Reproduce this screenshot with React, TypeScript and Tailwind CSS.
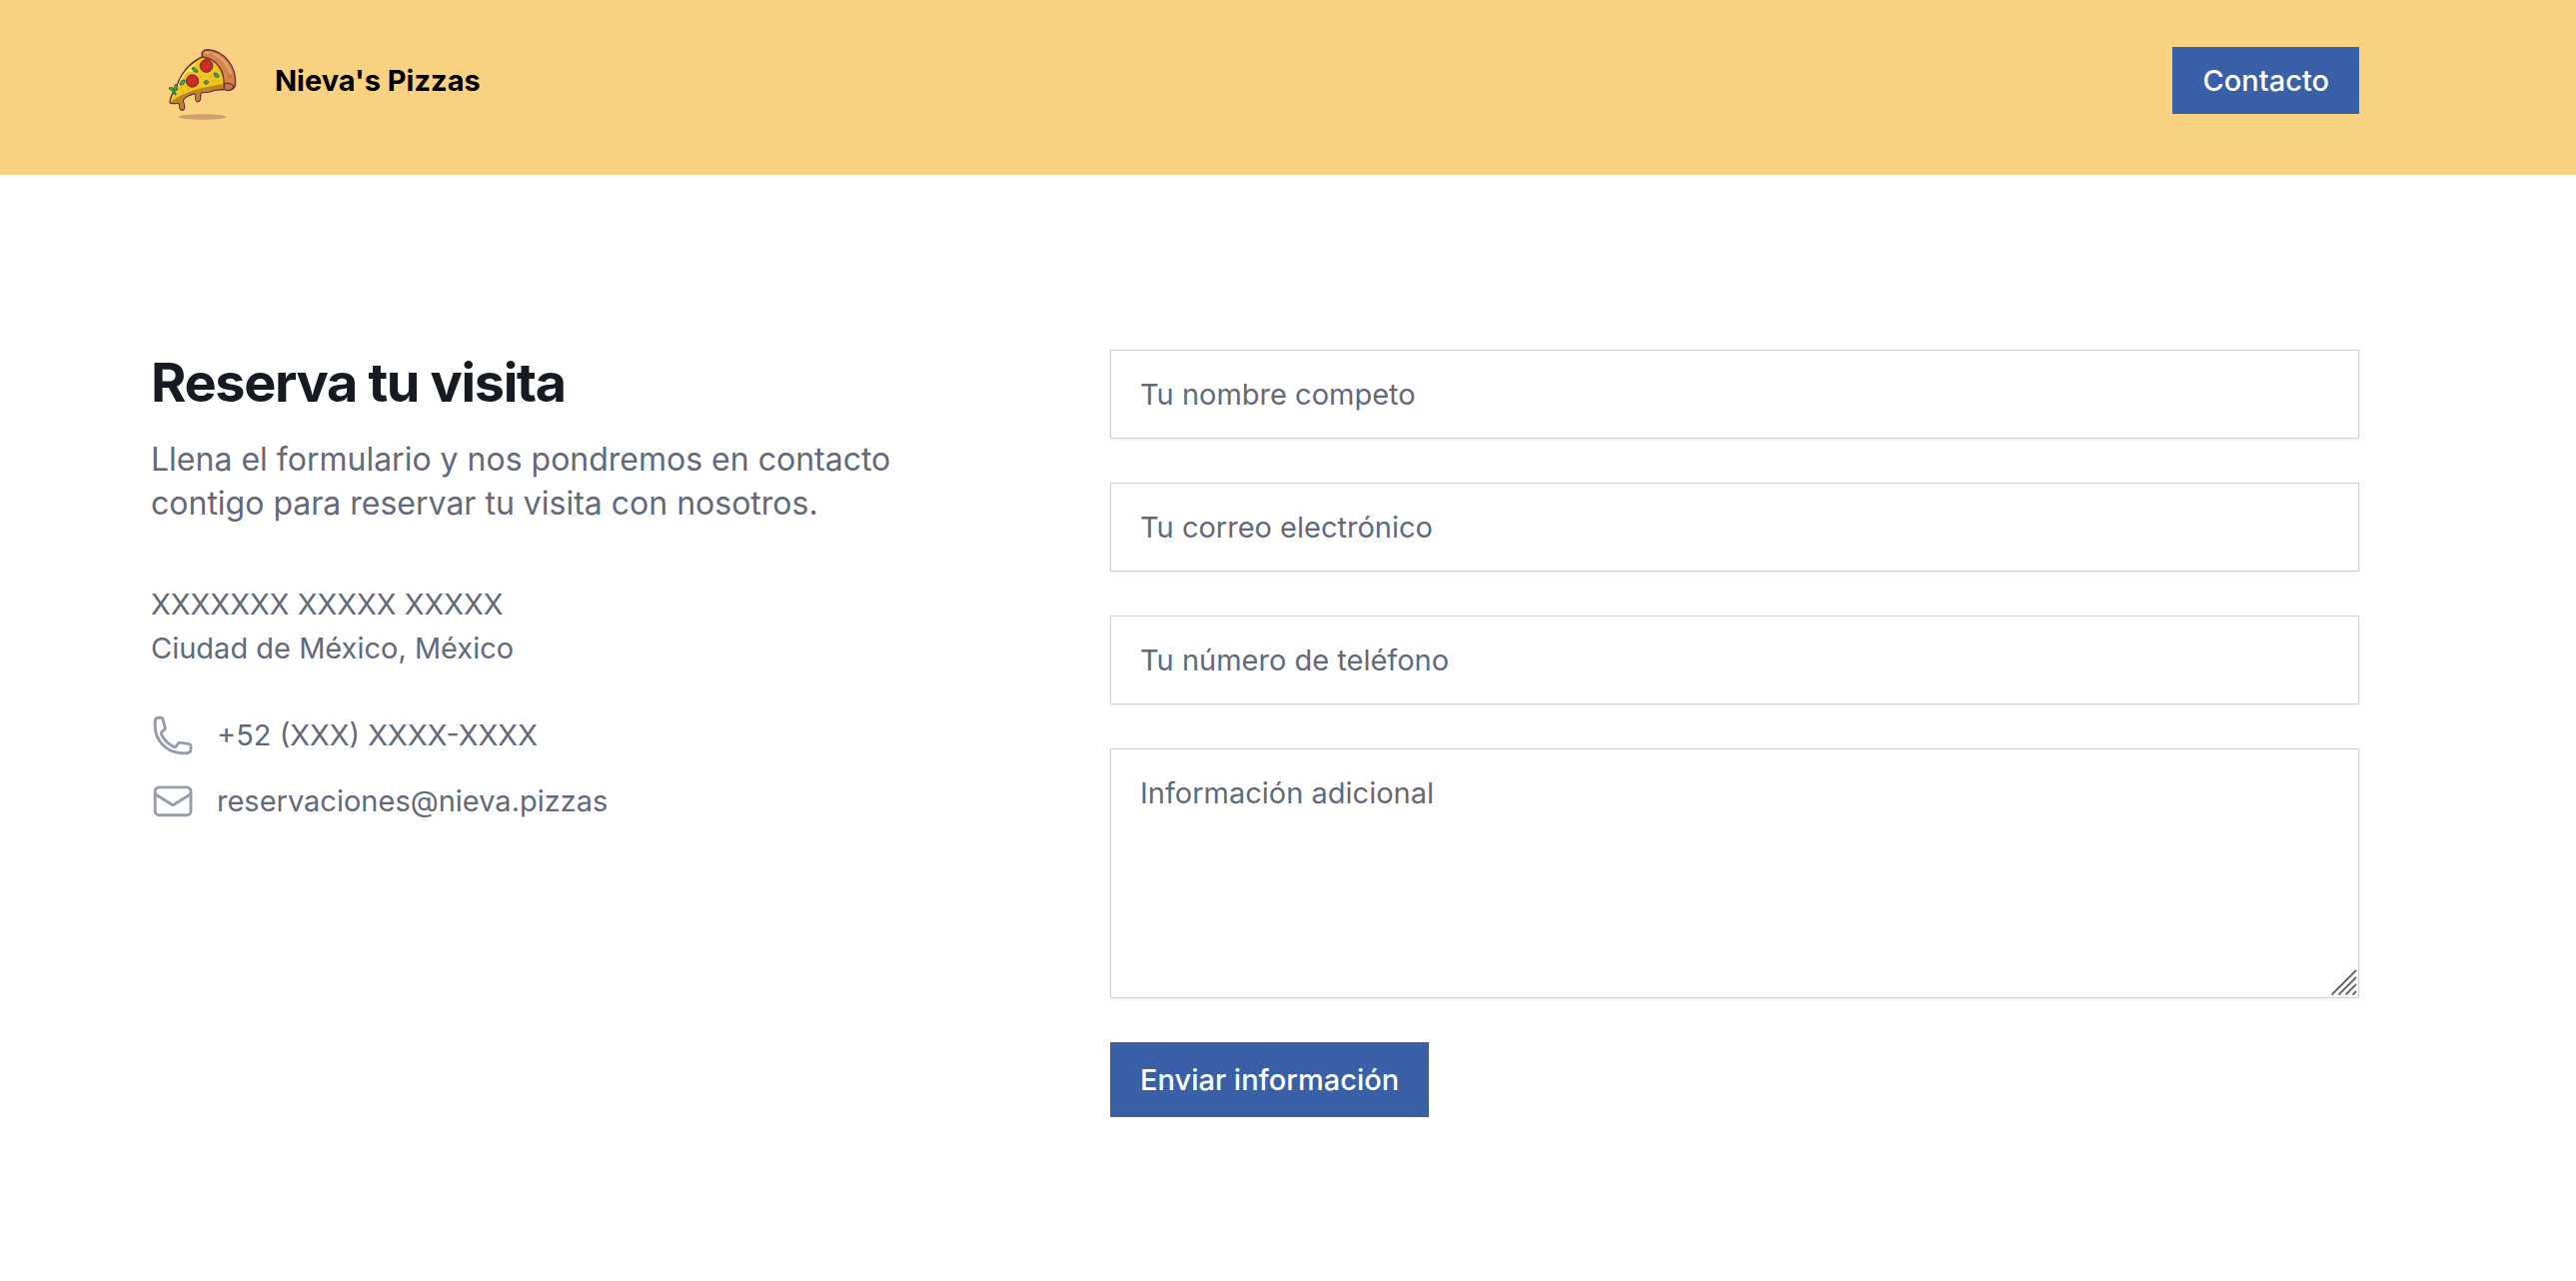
import React from "react";

const inputStyle =
  "block w-full border border-[#ccd0d8] bg-white px-[29px] py-[22px] text-[29px] leading-[43px] text-gray-900 shadow-[0_2px_4px_rgba(0,0,0,0.05)] placeholder:text-[#636978] placeholder:opacity-100";

function PizzaLogo() {
  return (
    <svg viewBox="0 0 100 100" className="h-[100px] w-[100px]" role="img" aria-label="Logo de pizza">
      <ellipse cx="52.5" cy="86" rx="24" ry="2.7" fill="#cf9f6c" />
      <path
        d="M52 26C40 32 31 43 27 55C24 60 20 66 20 71.500C22 74 26 71.500 29 72.500C31 75 28 78.500 32 79.200C36 79 34.500 73 33 70C34 66 41 63.500 45 62.500C47 64 44 68.500 47 70.800C52 71.500 50 64 51 62C54 60 58 62.500 61 60.500C66 58 71 59 74 58.500L77 50L70 30Z"
        fill="#efc71f"
        stroke="#6b2d47"
        strokeWidth="1.4"
        strokeLinejoin="round"
      />
      <path
        d="M21 71C31 63 44 58 72 53L74 58C69 58 65 57.500 61 60C58 62 54 59 50.500 61.500C49.500 64 51 70 48 70.200C44.500 69.500 47 63.500 45 62C39 63 33 65 32.500 70C34 73 35 78.500 32 78.600C29 77.500 31 73.500 29 72C26 71 24 73 21 71Z"
        fill="#bd8420"
      />
      <path d="M29 54C32 45 38 38 45 33" fill="none" stroke="#fbe26a" strokeWidth="2" strokeLinecap="round" />
      <path d="M40 40l3-1" stroke="#fff3b5" strokeWidth="2" strokeLinecap="round" />
      <path
        d="M53 26C50.500 22 53 18.700 58 18.700C75 20 87 36 85.500 54C85 57 83 58 81 58L74 55C75 40 67 28 53 26Z"
        fill="#d58549"
        stroke="#6b2d47"
        strokeWidth="1.4"
        strokeLinejoin="round"
      />
      <path d="M56 21.500C69 22 78 32 81 43" fill="none" stroke="#e8a06a" strokeWidth="2.4" strokeLinecap="round" />
      <path d="M60 21.500v2M62 22v2M78 44h4M78 46h4" stroke="#a95d37" strokeWidth=".7" />
      <path d="M74.500 53C77 51 83 53 84 55.500C83 60 77 60.500 74 58Z" fill="#c8763f" stroke="#6b2d47" strokeWidth="1.4" strokeLinejoin="round" />
      <g fill="#c92a1e" stroke="#6b2d47" strokeWidth="1">
        <circle cx="56.5" cy="35" r="6.4" />
        <circle cx="42.5" cy="50" r="6.2" />
      </g>
      <path d="M54 33h1M58 32h1M57 36h1M54 38h1M40 49h1M44 48h1M43 52h1M39 52h1" stroke="#e8653f" />
      <g fill="#43a453" stroke="#355e38" strokeWidth=".9">
        <path d="M42 37c3-1 5 1 6 4c-3 1-5-1-6-4Z" />
        <path d="M30 54c0-4 2-5 5-5c0 3-1 5-5 5Z" />
        <path d="M64 42c3 0 5 1 5 4c-3 1-5 0-5-4Z" />
        <path d="M54 52c1-3 3-3 5-1c-2 3-3 3-5 1Z" />
        <path d="M19 57c3-1 5 0 5 2c0-3 1-5 2-6c2 2 1 4 0 5l2 0c-1 2-3 2-4 2c2 1 2 3 2 4c-3-1-3-3-3-4c-2 0-3-1-4-3Z" />
      </g>
      <path d="M50 46h1M63 50h1M52 57h1M38 58h1M68 50h1M60 46h1M33 61h1" stroke="#b8841c" />
    </svg>
  );
}

const iconStyle = "size-[44px] shrink-0 stroke-[#969dab]";

function PhoneIcon() {
  return (
    <svg viewBox="0 0 24 24" fill="none" strokeWidth="1.6" strokeLinecap="round" strokeLinejoin="round" className={iconStyle} aria-hidden="true">
      <path d="M4.200 2.300H5.400C6 2.300 6.400 2.600 6.500 3.200L7.800 7.900C7.900 8.300 7.800 8.500 7.500 8.800L5.900 10.100C5.500 10.500 5.500 10.900 5.700 11.400C7.200 14.500 9.500 16.800 12.700 18.300C13.100 18.500 13.400 18.400 13.700 18.100L15.100 16.200C15.400 15.900 15.600 15.800 16 15.900L20.800 16.700C21.400 16.800 21.800 17.200 21.800 17.800V19.400C21.800 20.800 20.900 21.700 19.500 21.700H17.200C8.900 21.700 2.300 15.100 2.300 6.800V4.400C2.300 3.100 3 2.300 4.200 2.300Z" />
    </svg>
  );
}

function MailIcon() {
  return (
    <svg viewBox="0 0 24 24" fill="none" strokeWidth="1.6" strokeLinecap="round" strokeLinejoin="round" className={iconStyle} aria-hidden="true">
      <rect x="2.3" y="4.3" width="19.5" height="15.2" rx="2.2" />
      <path d="M2.300 8.100L11.300 13.700Q12 14.100 12.700 13.700L21.800 8.100" />
    </svg>
  );
}

export default function App() {
  return (
    <div className="min-h-screen bg-white font-[Inter,sans-serif] text-[29px] leading-[44px] text-[#636978]">
      <header className="flex items-start justify-between bg-[#f8d280] pt-[31px] pr-[217px] pb-[44px] pl-[150px]">
        <a href="#inicio" className="flex items-center gap-[25px] font-bold text-black">
          <PizzaLogo />
          <span>Nieva's Pizzas</span>
        </a>
        <a href="#contacto" className="mt-4 bg-[#3960a6] px-[30px] py-[12px] leading-[43px] font-medium text-white">
          Contacto
        </a>
      </header>
      <main id="contacto" className="grid grid-cols-5 pt-[175px] pr-[217px] pb-[165px] pl-[151px]">
        <section className="col-span-2">
          <h2 className="text-[54px] leading-[66px] font-bold tracking-tight text-[#161a23]">Reserva tu visita</h2>
          <p className="mt-[22px] max-w-[780px] text-[32px] leading-[44px]">
            Llena el formulario y nos pondremos en contacto contigo para reservar tu visita con nosotros.
          </p>
          <address className="mt-[57px] not-italic">
            <p>XXXXXXX XXXXX XXXXX</p>
            <p>Ciudad de México, México</p>
            <p className="mt-[43px] flex gap-[22px]">
              <PhoneIcon />
              <span>+52 (XXX) XXXX-XXXX</span>
            </p>
            <p className="mt-[22px] flex gap-[22px]">
              <MailIcon />
              <span>reservaciones@nieva.pizzas</span>
            </p>
          </address>
        </section>
        <form className="col-span-3 flex flex-col items-start gap-[44px] pl-[76px]">
          <input type="text" aria-label="Tu nombre competo" placeholder="Tu nombre competo" className={inputStyle} />
          <input type="email" aria-label="Tu correo electrónico" placeholder="Tu correo electrónico" className={inputStyle} />
          <input type="tel" aria-label="Tu número de teléfono" placeholder="Tu número de teléfono" className={inputStyle} />
          <div className="relative w-full">
            <textarea rows={4} aria-label="Información adicional" placeholder="Información adicional" className={`${inputStyle} min-h-[250px] resize-y`} />
            <svg viewBox="0 0 28 28" className="pointer-events-none absolute right-px bottom-px size-[28px] bg-white" fill="none" stroke="#666" strokeWidth="1.8" aria-hidden="true">
              <path d="M1.500 25.500L26 1M8.500 25.500L26 8M15.500 25.500L26 15M22.500 25.500L26 22" />
            </svg>
          </div>
          <button type="submit" className="bg-[#3960a6] px-[30px] py-[16px] leading-[43px] font-medium text-white">
            Enviar información
          </button>
        </form>
      </main>
    </div>
  );
}
